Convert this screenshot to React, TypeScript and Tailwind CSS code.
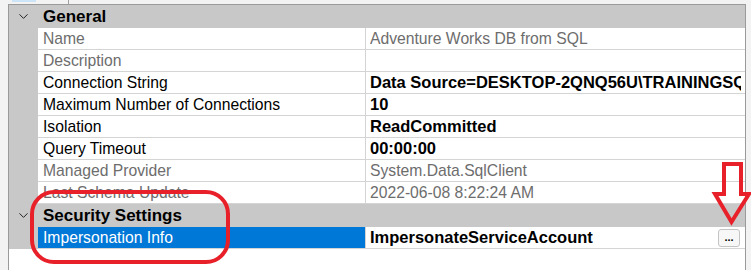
import { ChevronDown } from "lucide-react";

type Prop = {
  name: string;
  value: string;
  readOnly?: boolean;
  bold?: boolean;
  selected?: boolean;
  button?: boolean;
};

const general: Prop[] = [
  { name: "Name", value: "Adventure Works DB from SQL", readOnly: true },
  { name: "Description", value: "", readOnly: true },
  { name: "Connection String", value: "Data Source=DESKTOP-2QNQ56U\\TRAININGSQL;Initial Catalog=AdventureWorks", bold: true },
  { name: "Maximum Number of Connections", value: "10", bold: true },
  { name: "Isolation", value: "ReadCommitted", bold: true },
  { name: "Query Timeout", value: "00:00:00", bold: true },
  { name: "Managed Provider", value: "System.Data.SqlClient", readOnly: true },
  { name: "Last Schema Update", value: "2022-06-08 8:22:24 AM", readOnly: true },
];

const security: Prop[] = [
  { name: "Impersonation Info", value: "ImpersonateServiceAccount", bold: true, selected: true, button: true },
];

function Category({ title }: { title: string }) {
  return (
    <div className="flex h-[23px] items-center bg-[#c8c8c8]">
      <div className="flex w-[29px] justify-center">
        <ChevronDown className="h-[15px] w-[15px] text-[#222]" strokeWidth={1.6} />
      </div>
      <span className="pl-[5px] text-[17px] font-bold text-black">{title}</span>
    </div>
  );
}

function Row({ p }: { p: Prop }) {
  return (
    <div className="flex h-[22px]">
      <div className="w-[29px] shrink-0 bg-[#c8c8c8]" />
      <div
        className={`flex w-[328px] shrink-0 items-center border-r border-b border-[#d4d4d4] pl-[5px] text-[15.7px] ${
          p.selected ? "bg-[#0078d7] text-white" : p.readOnly ? "text-[#6d6d6d]" : "text-black"
        }`}
      >
        <span className="whitespace-nowrap">{p.name}</span>
      </div>
      <div className="flex min-w-0 flex-1 items-center border-b border-[#d4d4d4] pl-[4px] pr-[4px]">
        <span
          className={`flex-1 overflow-hidden whitespace-nowrap ${
            p.bold ? "text-[16.5px] font-bold text-black" : "text-[15.7px] text-[#6d6d6d]"
          }`}
        >
          {p.value}
        </span>
        {p.button && (
          <div className="mr-[1px] flex h-[18px] w-[22px] items-end justify-center rounded-[3px] border border-[#c4c4c4] bg-[#f7f7f7] pb-[3px] text-[11px] leading-none font-bold text-black">
            ...
          </div>
        )}
      </div>
    </div>
  );
}

export default function App() {
  return (
    <div
      className="relative h-[270px] w-[751px] overflow-hidden bg-[#f3f3f3]"
      style={{ fontFamily: '"Liberation Sans", Arial, sans-serif' }}
    >
      <div className="relative h-[4px]">
        <div className="absolute top-0 left-[12px] h-[2px] w-[24px] bg-[#cce4f7]" />
        <div className="absolute top-0 left-[68px] h-[4px] w-px bg-[#a0a0a0]" />
      </div>
      <div className="ml-[8px] h-[266px] w-[738px] border-t border-r border-l border-[#9a9a9a] bg-white">
        <Category title="General" />
        {general.map((p) => (
          <Row key={p.name} p={p} />
        ))}
        <Category title="Security Settings" />
        {security.map((p) => (
          <Row key={p.name} p={p} />
        ))}
      </div>

      <svg className="pointer-events-none absolute inset-0" width="751" height="270">
        <rect x="32" y="192" width="196" height="70" rx="22" fill="none" stroke="#e8202a" strokeWidth="4" />
        <path
          d="M724 164 L741 164 L741 194 L749 194 L731.5 222 L715 194 L724 194 Z"
          fill="none"
          stroke="#e8202a"
          strokeWidth="4"
          strokeLinejoin="miter"
        />
      </svg>
    </div>
  );
}
